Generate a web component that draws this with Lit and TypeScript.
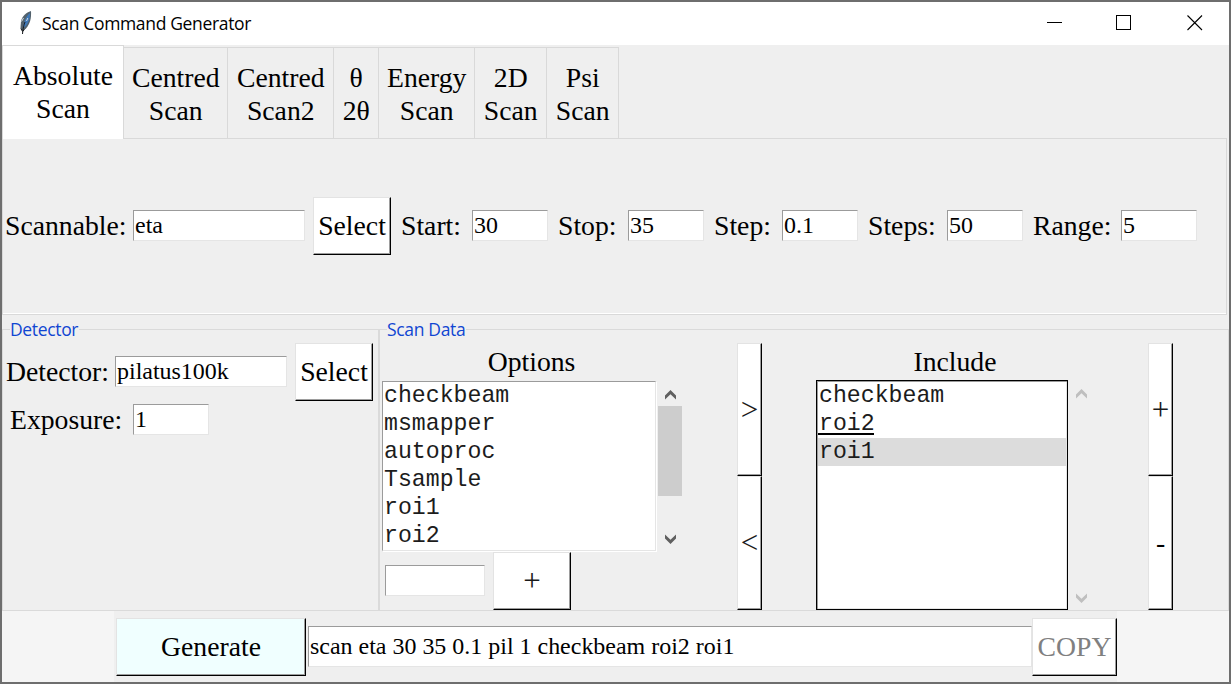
import { LitElement, html, css } from "lit";
import { customElement, property } from "lit/decorators.js";
import { classMap } from "lit/directives/class-map.js";

@customElement("tk-entry")
class TkEntry extends LitElement {
  @property() value = "";

  static styles = css`
    :host {
      display: flex;
      align-items: center;
      box-sizing: border-box;
      height: 31px;
      padding: 0 0 1px 1px;
      border: 1px solid;
      border-color: #9b9b9b #e5e5e5 #e5e5e5 #9b9b9b;
      background: #fff;
      font-size: 23.96px;
      line-height: 28px;
      white-space: pre;
    }
  `;

  render() {
    return html`${this.value}`;
  }
}

@customElement("tk-button")
class TkButton extends LitElement {
  static styles = css`
    :host {
      display: flex;
      align-items: center;
      justify-content: center;
      box-sizing: border-box;
      height: 58px;
      border: 1px solid;
      border-color: #e3e3e3 #000 #000 #e3e3e3;
      box-shadow: inset -1px -1px #9d9d9d;
      background: var(--face, #fff);
      line-height: 32px;
      white-space: nowrap;
    }
  `;

  render() {
    return html`<slot></slot>`;
  }
}

@customElement("tk-scrollbar")
class TkScrollbar extends LitElement {
  @property({ type: Boolean, reflect: true }) disabled = false;

  static styles = css`
    :host {
      display: flex;
      flex-direction: column;
      justify-content: space-between;
      width: 24px;
      color: #606060;
    }
    :host([disabled]) {
      color: #bfbfbf;
    }
    .arrow {
      display: block;
      width: 24px;
      height: 25px;
    }
    .thumb {
      height: 90px;
      background: #cdcdcd;
    }
    .space {
      flex: 1;
    }
  `;

  render() {
    return html`
      <svg class="arrow" viewBox="0 0 24 25">
        <path d="M7 14.500 12.500 9 18 14.500V18.600L12.500 13.300 7 18.600Z" fill="currentColor" />
      </svg>
      ${this.disabled ? "" : html`<div class="thumb"></div>`}
      <div class="space"></div>
      <svg class="arrow" viewBox="0 0 24 25">
        <path d="M7 8.500 12.500 13.800 18 8.500V12.600L12.500 18.100 7 12.600Z" fill="currentColor" />
      </svg>
    `;
  }
}

const TABS = [
  { lines: ["Absolute", "Scan"], width: 122 },
  { lines: ["Centred", "Scan"], width: 104 },
  { lines: ["Centred", "Scan2"], width: 106 },
  { lines: ["θ", "2θ"], width: 45 },
  { lines: ["Energy", "Scan"], width: 96 },
  { lines: ["2D", "Scan"], width: 72 },
  { lines: ["Psi", "Scan"], width: 72 },
];

const OPTIONS = ["checkbeam", "msmapper", "autoproc", "Tsample", "roi1", "roi2"];

const INCLUDED = [
  { name: "checkbeam" },
  { name: "roi2", active: true },
  { name: "roi1", selected: true },
];

@customElement("app-root")
class AppRoot extends LitElement {
  static styles = css`
    :host {
      display: flex;
      flex-direction: column;
      box-sizing: border-box;
      width: 1231px;
      height: 684px;
      border: 2px solid #6e6e6e;
      background: #efefef;
      color: #000;
      font-family: "Liberation Serif", "Times New Roman", serif;
      font-size: 27.7px;
      line-height: 32px;
      overflow: hidden;
      white-space: nowrap;
    }
    .titlebar {
      display: flex;
      align-items: center;
      height: 43px;
      background: #fff;
      padding-left: 15px;
    }
    .feather {
      width: 18px;
      height: 26px;
      margin: 0 7px 3px 0;
    }
    .title {
      flex: 1;
      padding-bottom: 2px;
      font-family: "Open Sans", sans-serif;
      font-size: 17.5px;
      letter-spacing: -0.34px;
      line-height: 24px;
    }
    .controls {
      display: block;
      width: 206px;
      height: 43px;
    }
    .tabs {
      display: flex;
      height: 94px;
    }
    .tab {
      box-sizing: border-box;
      height: 92px;
      margin-top: 2px;
      padding: 13px 0 0 0.5px;
      border: solid #d9d9d9;
      border-width: 1px 1px 1px 0;
      text-align: center;
      line-height: 33px;
    }
    .tab.selected {
      height: 94px;
      margin-top: 0;
      padding-left: 0;
      border-bottom: 0;
      border-left: 1px solid #d9d9d9;
      background: #fff;
    }
    .tabfill {
      flex: 1;
      margin-right: 2px;
      border-bottom: 1px solid #d9d9d9;
    }
    .panel {
      display: grid;
      grid-template-columns: 128px 172px 8px 78px 10px 71px 76px 10px 70px 76px 10px 68px 76px 10px 79px 76px 10px 88px 76px;
      align-items: center;
      box-sizing: border-box;
      height: 176px;
      width: 1225px;
      padding: 0 0 2px 2px;
      border: solid #d9d9d9;
      border-width: 0 1px 1px 1px;
      box-shadow: inset 0 -1px #fff;
    }
    .gap {
      height: 1px;
    }
    .frames {
      display: flex;
      height: 296px;
    }
    .frame {
      display: flex;
      flex-direction: column;
      box-sizing: border-box;
      height: 282px;
      margin-top: 14px;
      border: 1px solid #dadada;
    }
    .detector {
      width: 377px;
    }
    .data {
      flex: 1;
    }
    .legend {
      align-self: flex-start;
      height: 22px;
      margin: -11px 0 2px 7px;
      padding-right: 1px;
      background: #efefef;
      color: #1046d2;
      font-family: "Open Sans", sans-serif;
      font-size: 17.5px;
      letter-spacing: -0.34px;
      line-height: 21px;
    }
    .line {
      display: flex;
      align-items: center;
    }
    .detector .line {
      padding-left: 3px;
    }
    .detector .exposure {
      padding: 3px 0 0 7px;
    }
    .detector tk-entry {
      margin-bottom: 2px;
    }
    .detector .exposure tk-entry {
      margin-bottom: 3px;
    }
    .name {
      width: 109px;
    }
    .exposure .name {
      width: 123px;
      height: 32px;
      margin-bottom: 2px;
    }
    .wide {
      width: 172px;
    }
    .short {
      width: 76px;
    }
    .pick {
      width: 78px;
      margin-left: 8px;
    }
    .columns {
      display: flex;
      height: 267px;
      padding-left: 2px;
    }
    .options {
      width: 300px;
      margin-right: 55px;
    }
    .include {
      width: 277px;
      margin: 0 55px 0 54px;
    }
    .heading {
      height: 37px;
      line-height: 38px;
      padding-left: 1px;
      text-align: center;
    }
    .options .heading {
      height: 38px;
      padding: 0 1px 0 0;
    }
    .listrow {
      display: flex;
    }
    .list {
      box-sizing: border-box;
      font-family: "Liberation Mono", "Courier New", monospace;
      font-size: 23.2px;
      line-height: 28px;
      background: #fff;
      color: #1c1c1c;
    }
    .options .list {
      width: 274px;
      height: 170px;
      padding-left: 1px;
      border: 1px solid;
      border-color: #9b9b9b #e5e5e5 #e5e5e5 #9b9b9b;
      margin-right: 2px;
      box-shadow: 1px 1px #fff;
    }
    .include .list {
      width: 252px;
      height: 230px;
      margin-right: 1px;
      border: 1px solid #000;
      box-shadow: inset 1px 1px #9b9b9b, inset -1px -1px #e5e5e5;
      padding: 1px;
    }
    .item {
      height: 28px;
    }
    .include .item {
      padding-left: 1px;
    }
    .item.selected {
      margin-left: 0;
      background: #dcdcdc;
    }
    .mark {
      display: inline-block;
      box-sizing: border-box;
      height: 28px;
    }
    .mark.active {
      height: 25px;
      margin-left: -1px;
      width: 56px;
      padding-left: 1px;
      border-bottom: 2px solid #000;
    }
    .add {
      display: flex;
      align-items: center;
      padding: 1px 0 0 3px;
    }
    .custom {
      width: 100px;
      margin: 0 8px 2px 0;
    }
    .plus {
      width: 78px;
    }
    .sign {
      font-size: 31px;
      color: #1a1a1a;
    }
    .move {
      width: 25px;
    }
    .move tk-button {
      height: 134px;
    }
    .move tk-button:first-child {
      height: 133px;
    }
    .footer {
      display: flex;
      align-items: center;
      flex: 1;
      padding: 0 112px 0 112px;
      background: linear-gradient(to right, #f5f5f5 112px, #efefef 112px, #efefef 1115px, #f5f5f5 1115px);
    }
    .generate {
      --face: #f0ffff;
      width: 190px;
      margin: 0 2px;
    }
    .command {
      width: 724px;
      height: 41px;
    }
    .copy {
      width: 85px;
      color: #808080;
    }
  `;

  render() {
    return html`
      <div class="titlebar">
        <svg class="feather" viewBox="0 0 18 26">
          <path d="M14 2C9 3.500 5.500 7 4 12L3.500 19 5.500 22 9 19.500C13 15 14.500 9 14 2Z" fill="#52616c" />
          <path d="M13 4C9 7.500 7 12 6 19L9 17C12 13 13.300 8 13 4Z" fill="#3e78b8" />
          <path d="M8 13C7 16 6 19 5.500 25M3.800 19.500 5.600 22.500 7.500 20.500" fill="none" stroke="#15191d" stroke-width="1" />
          <path d="M4.500 12.500 6.500 9M9.500 12 10.800 9" fill="none" stroke="#cdd8df" stroke-width="1" />
        </svg>
        <div class="title">Scan Command Generator</div>
        <svg class="controls" viewBox="0 0 206 43" fill="none" stroke="#000">
          <path d="M24 20.500H39" />
          <rect x="93.500" y="13.500" width="14" height="14" />
          <path d="M164.500 13.500 179 28M179 13.500 164.500 28" stroke-width="1.100" />
        </svg>
      </div>
      <div class="tabs">
        ${TABS.map(
          (t, i) => html`<div class=${classMap({ tab: true, selected: i === 0 })} style="width:${t.width}px">
            ${t.lines[0]}<br />${t.lines[1]}
          </div>`
        )}
        <div class="tabfill"></div>
      </div>
      <div class="panel">
        <span>Scannable:</span><tk-entry value="eta"></tk-entry>
        <i class="gap"></i><tk-button>Select</tk-button>
        <i class="gap"></i><span>Start:</span><tk-entry value="30"></tk-entry>
        <i class="gap"></i><span>Stop:</span><tk-entry value="35"></tk-entry>
        <i class="gap"></i><span>Step:</span><tk-entry value="0.1"></tk-entry>
        <i class="gap"></i><span>Steps:</span><tk-entry value="50"></tk-entry>
        <i class="gap"></i><span>Range:</span><tk-entry value="5"></tk-entry>
      </div>
      <div class="frames">
        <div class="frame detector">
          <div class="legend">Detector</div>
          <div class="line">
            <span class="name">Detector:</span>
            <tk-entry class="wide" value="pilatus100k"></tk-entry>
            <tk-button class="pick">Select</tk-button>
          </div>
          <div class="line exposure">
            <span class="name">Exposure:</span>
            <tk-entry class="short" value="1"></tk-entry>
          </div>
        </div>
        <div class="frame data">
          <div class="legend">Scan Data</div>
          <div class="columns">
            <div class="options">
              <div class="heading">Options</div>
              <div class="listrow">
                <div class="list">${OPTIONS.map((o) => html`<div class="item">${o}</div>`)}</div>
                <tk-scrollbar></tk-scrollbar>
              </div>
              <div class="add">
                <tk-entry class="custom"></tk-entry>
                <tk-button class="plus sign">+</tk-button>
              </div>
            </div>
            <div class="move"><tk-button class="sign">&gt;</tk-button><tk-button class="sign">&lt;</tk-button></div>
            <div class="include">
              <div class="heading">Include</div>
              <div class="listrow">
                <div class="list">
                  ${INCLUDED.map(
                    (o) => html`<div class=${classMap({ item: true, selected: !!o.selected })}><span class=${classMap({ mark: true, active: !!o.active })}>${o.name}</span></div>`
                  )}
                </div>
                <tk-scrollbar disabled></tk-scrollbar>
              </div>
            </div>
            <div class="move"><tk-button class="sign">+</tk-button><tk-button>-</tk-button></div>
          </div>
        </div>
      </div>
      <div class="footer">
        <tk-button class="generate">Generate</tk-button>
        <tk-entry class="command" value="scan eta 30 35 0.1 pil 1 checkbeam roi2 roi1"></tk-entry>
        <tk-button class="copy">COPY</tk-button>
      </div>
    `;
  }
}
